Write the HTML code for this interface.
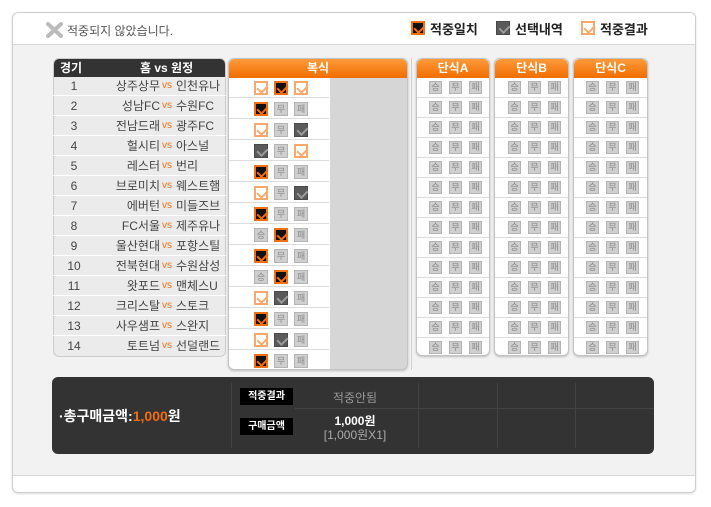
<!DOCTYPE html>
<html><head><meta charset="utf-8"><style>
*{margin:0;padding:0;box-sizing:border-box}
body{width:711px;height:507px;background:#fff;font-family:"Liberation Sans","Noto Sans CJK KR",sans-serif;position:relative;overflow:hidden}
.a{position:absolute}
#wrap{left:12px;top:12px;width:684px;height:481px;border:1px solid #cfcfcf;border-radius:6px;background:#f2f2f2;overflow:hidden;box-shadow:0 1px 2px #ddd}
#hd{left:0;top:0;width:682px;height:32px;background:#fff;border-bottom:1px solid #d8d8d8}
#ft{left:0;top:462px;width:682px;height:20px;background:#fff;border-top:1px solid #d8d8d8}
.c{position:absolute;width:14px;height:14px}
.c.x{background:#111;border:2px solid #f07015}
.c.o{background:#fff;border:2px solid #f7a86c}
.c.g{background:#5a5a5a;border:1px solid #4a4a4a}
.c::after{content:'';position:absolute;left:3px;top:0px;width:5px;height:8px;border:solid;border-width:0 2px 2px 0;transform:rotate(45deg)}
.c.x::after{border-color:#f26d10}
.c.o::after{border-color:#f8ab70}
.c.g::after{border-color:#9a9a9a;left:4px;top:1px}
.n{position:absolute;width:14px;height:14px;background:#cfcfcf;border:1px solid #b4b4b4;color:#8a8a8a;font-size:9px;line-height:12px;text-align:center}
.oh{background:linear-gradient(#ff9a3a,#f06d00);color:#fff;font-weight:bold;font-size:12px;text-align:center;line-height:19px;border-radius:6px 6px 0 0;height:19px}
.row{position:absolute;left:0;height:20px;border-bottom:1px solid #fff;width:100%}
.lt{font-size:12px;color:#444;line-height:20px}
.vs{color:#f07015;font-size:10px}
.drow{position:absolute;left:0;width:100%;height:21px;border-bottom:1px solid #dcdcdc}
.dl{position:absolute;width:13px;height:13px;background:#cfcfcf;border:1px solid #b4b4b4;color:#8a8a8a;font-size:9px;line-height:11px;text-align:center}
.dc{position:absolute;left:0;width:711px;height:20px}
</style></head><body>
<div class="a" id="wrap">
<div class="a" id="hd"></div>
<div class="a" id="ft"></div>
</div>
<svg class="a" style="left:46px;top:22px" width="17" height="16"><path d="M2 2L15 14M15 2L2 14" stroke="#bbb" stroke-width="4" stroke-linecap="round"/></svg>
<div class="a" style="left:67px;top:22px;font-size:12px;color:#555">적중되지 않았습니다.</div>
<div class="c x" style="left:411px;top:21px"></div><div class="a" style="left:430px;top:19px;font-size:13px;color:#222;font-weight:bold">적중일치</div>
<div class="c g" style="left:496px;top:21px"></div><div class="a" style="left:515px;top:19px;font-size:13px;color:#222;font-weight:bold">선택내역</div>
<div class="c o" style="left:581px;top:21px"></div><div class="a" style="left:600px;top:19px;font-size:13px;color:#222;font-weight:bold">적중결과</div>

<div class="a" style="left:53px;top:58px;width:173px;height:299px;background:#ebebeb;border:1px solid #ccc;border-radius:6px;overflow:hidden">
<div class="a" style="left:0;top:0;width:173px;height:18px;background:#333;color:#fff;font-size:12px;font-weight:bold;line-height:18px"><span class="a" style="left:6px">경기</span><span class="a" style="left:86px">홈 vs 원정</span></div>
</div>
<div class="a lt" style="left:53px;top:76px;width:173px">
<div class="row" style="top:0"><span class="a" style="left:0;width:42px;text-align:center">1</span><span class="a" style="right:66px">상주상무</span><span class="a vs" style="left:109px">vs</span><span class="a" style="left:123px">인천유나</span></div>
<div class="row" style="top:20px"><span class="a" style="left:0;width:42px;text-align:center">2</span><span class="a" style="right:66px">성남FC</span><span class="a vs" style="left:109px">vs</span><span class="a" style="left:123px">수원FC</span></div>
<div class="row" style="top:40px"><span class="a" style="left:0;width:42px;text-align:center">3</span><span class="a" style="right:66px">전남드래</span><span class="a vs" style="left:109px">vs</span><span class="a" style="left:123px">광주FC</span></div>
<div class="row" style="top:60px"><span class="a" style="left:0;width:42px;text-align:center">4</span><span class="a" style="right:66px">헐시티</span><span class="a vs" style="left:109px">vs</span><span class="a" style="left:123px">아스널</span></div>
<div class="row" style="top:80px"><span class="a" style="left:0;width:42px;text-align:center">5</span><span class="a" style="right:66px">레스터</span><span class="a vs" style="left:109px">vs</span><span class="a" style="left:123px">번리</span></div>
<div class="row" style="top:100px"><span class="a" style="left:0;width:42px;text-align:center">6</span><span class="a" style="right:66px">브로미치</span><span class="a vs" style="left:109px">vs</span><span class="a" style="left:123px">웨스트햄</span></div>
<div class="row" style="top:120px"><span class="a" style="left:0;width:42px;text-align:center">7</span><span class="a" style="right:66px">에버턴</span><span class="a vs" style="left:109px">vs</span><span class="a" style="left:123px">미들즈브</span></div>
<div class="row" style="top:140px"><span class="a" style="left:0;width:42px;text-align:center">8</span><span class="a" style="right:66px">FC서울</span><span class="a vs" style="left:109px">vs</span><span class="a" style="left:123px">제주유나</span></div>
<div class="row" style="top:160px"><span class="a" style="left:0;width:42px;text-align:center">9</span><span class="a" style="right:66px">울산현대</span><span class="a vs" style="left:109px">vs</span><span class="a" style="left:123px">포항스틸</span></div>
<div class="row" style="top:180px"><span class="a" style="left:0;width:42px;text-align:center">10</span><span class="a" style="right:66px">전북현대</span><span class="a vs" style="left:109px">vs</span><span class="a" style="left:123px">수원삼성</span></div>
<div class="row" style="top:200px"><span class="a" style="left:0;width:42px;text-align:center">11</span><span class="a" style="right:66px">왓포드</span><span class="a vs" style="left:109px">vs</span><span class="a" style="left:123px">맨체스U</span></div>
<div class="row" style="top:220px"><span class="a" style="left:0;width:42px;text-align:center">12</span><span class="a" style="right:66px">크리스탈</span><span class="a vs" style="left:109px">vs</span><span class="a" style="left:123px">스토크</span></div>
<div class="row" style="top:240px"><span class="a" style="left:0;width:42px;text-align:center">13</span><span class="a" style="right:66px">사우샘프</span><span class="a vs" style="left:109px">vs</span><span class="a" style="left:123px">스완지</span></div>
<div class="row" style="top:260px;border:none"><span class="a" style="left:0;width:42px;text-align:center">14</span><span class="a" style="right:66px">토트넘</span><span class="a vs" style="left:109px">vs</span><span class="a" style="left:123px">선덜랜드</span></div>
</div>

<div class="a" style="left:228px;top:58px;width:180px;height:312px;border:1px solid #c4c4c4;border-radius:6px;overflow:hidden;background:#d6d6d6;box-shadow:0 1px 2px #bbb">
<div class="oh">복식</div>
<div class="a" style="left:0;top:19px;width:101px;height:293px;background:#fff"></div>
</div>
<div class="a" style="left:229px;top:77px;width:100px">
<div class="drow" style="top:0"><div class="c o" style="left:25px;top:4px"></div><div class="c x" style="left:45px;top:4px"></div><div class="c o" style="left:65px;top:4px"></div></div>
<div class="drow" style="top:21px"><div class="c x" style="left:25px;top:4px"></div><div class="n" style="left:45px;top:4px">무</div><div class="n" style="left:65px;top:4px">패</div></div>
<div class="drow" style="top:42px"><div class="c o" style="left:25px;top:4px"></div><div class="n" style="left:45px;top:4px">무</div><div class="c g" style="left:65px;top:4px"></div></div>
<div class="drow" style="top:63px"><div class="c g" style="left:25px;top:4px"></div><div class="n" style="left:45px;top:4px">무</div><div class="c o" style="left:65px;top:4px"></div></div>
<div class="drow" style="top:84px"><div class="c x" style="left:25px;top:4px"></div><div class="n" style="left:45px;top:4px">무</div><div class="n" style="left:65px;top:4px">패</div></div>
<div class="drow" style="top:105px"><div class="c o" style="left:25px;top:4px"></div><div class="n" style="left:45px;top:4px">무</div><div class="c g" style="left:65px;top:4px"></div></div>
<div class="drow" style="top:126px"><div class="c x" style="left:25px;top:4px"></div><div class="n" style="left:45px;top:4px">무</div><div class="n" style="left:65px;top:4px">패</div></div>
<div class="drow" style="top:147px"><div class="n" style="left:25px;top:4px">승</div><div class="c x" style="left:45px;top:4px"></div><div class="n" style="left:65px;top:4px">패</div></div>
<div class="drow" style="top:168px"><div class="c x" style="left:25px;top:4px"></div><div class="n" style="left:45px;top:4px">무</div><div class="n" style="left:65px;top:4px">패</div></div>
<div class="drow" style="top:189px"><div class="n" style="left:25px;top:4px">승</div><div class="c x" style="left:45px;top:4px"></div><div class="n" style="left:65px;top:4px">패</div></div>
<div class="drow" style="top:210px"><div class="c o" style="left:25px;top:4px"></div><div class="c g" style="left:45px;top:4px"></div><div class="n" style="left:65px;top:4px">패</div></div>
<div class="drow" style="top:231px"><div class="c x" style="left:25px;top:4px"></div><div class="n" style="left:45px;top:4px">무</div><div class="n" style="left:65px;top:4px">패</div></div>
<div class="drow" style="top:252px"><div class="c o" style="left:25px;top:4px"></div><div class="c g" style="left:45px;top:4px"></div><div class="n" style="left:65px;top:4px">패</div></div>
<div class="drow" style="top:273px;border:none"><div class="c x" style="left:25px;top:4px"></div><div class="n" style="left:45px;top:4px">무</div><div class="n" style="left:65px;top:4px">패</div></div>
</div>

<div class="a" style="left:411px;top:58px;width:1px;height:312px;background:#d0d0d0"></div>

<div class="a" style="left:416px;top:58px;width:74px;height:298px;border:1px solid #c4c4c4;border-radius:6px;overflow:hidden;background:#fff;box-shadow:0 1px 2px #bbb;background-image:repeating-linear-gradient(#fff 0 19px,#dcdcdc 19px 20px);background-position:0 19px"><div class="oh">단식A</div></div>
<div class="a" style="left:494px;top:58px;width:75px;height:298px;border:1px solid #c4c4c4;border-radius:6px;overflow:hidden;background:#fff;box-shadow:0 1px 2px #bbb;background-image:repeating-linear-gradient(#fff 0 19px,#dcdcdc 19px 20px);background-position:0 19px"><div class="oh">단식B</div></div>
<div class="a" style="left:573px;top:58px;width:75px;height:298px;border:1px solid #c4c4c4;border-radius:6px;overflow:hidden;background:#fff;box-shadow:0 1px 2px #bbb;background-image:repeating-linear-gradient(#fff 0 19px,#dcdcdc 19px 20px);background-position:0 19px"><div class="oh">단식C</div></div>

<div class="a" style="left:0;top:81px;width:711px">
<div class="dc" style="top:0"><div class="dl" style="left:429px">승</div><div class="dl" style="left:449px">무</div><div class="dl" style="left:469px">패</div><div class="dl" style="left:508px">승</div><div class="dl" style="left:528px">무</div><div class="dl" style="left:548px">패</div><div class="dl" style="left:586px">승</div><div class="dl" style="left:606px">무</div><div class="dl" style="left:626px">패</div></div>
<div class="dc" style="top:20px"><div class="dl" style="left:429px">승</div><div class="dl" style="left:449px">무</div><div class="dl" style="left:469px">패</div><div class="dl" style="left:508px">승</div><div class="dl" style="left:528px">무</div><div class="dl" style="left:548px">패</div><div class="dl" style="left:586px">승</div><div class="dl" style="left:606px">무</div><div class="dl" style="left:626px">패</div></div>
<div class="dc" style="top:40px"><div class="dl" style="left:429px">승</div><div class="dl" style="left:449px">무</div><div class="dl" style="left:469px">패</div><div class="dl" style="left:508px">승</div><div class="dl" style="left:528px">무</div><div class="dl" style="left:548px">패</div><div class="dl" style="left:586px">승</div><div class="dl" style="left:606px">무</div><div class="dl" style="left:626px">패</div></div>
<div class="dc" style="top:60px"><div class="dl" style="left:429px">승</div><div class="dl" style="left:449px">무</div><div class="dl" style="left:469px">패</div><div class="dl" style="left:508px">승</div><div class="dl" style="left:528px">무</div><div class="dl" style="left:548px">패</div><div class="dl" style="left:586px">승</div><div class="dl" style="left:606px">무</div><div class="dl" style="left:626px">패</div></div>
<div class="dc" style="top:80px"><div class="dl" style="left:429px">승</div><div class="dl" style="left:449px">무</div><div class="dl" style="left:469px">패</div><div class="dl" style="left:508px">승</div><div class="dl" style="left:528px">무</div><div class="dl" style="left:548px">패</div><div class="dl" style="left:586px">승</div><div class="dl" style="left:606px">무</div><div class="dl" style="left:626px">패</div></div>
<div class="dc" style="top:100px"><div class="dl" style="left:429px">승</div><div class="dl" style="left:449px">무</div><div class="dl" style="left:469px">패</div><div class="dl" style="left:508px">승</div><div class="dl" style="left:528px">무</div><div class="dl" style="left:548px">패</div><div class="dl" style="left:586px">승</div><div class="dl" style="left:606px">무</div><div class="dl" style="left:626px">패</div></div>
<div class="dc" style="top:120px"><div class="dl" style="left:429px">승</div><div class="dl" style="left:449px">무</div><div class="dl" style="left:469px">패</div><div class="dl" style="left:508px">승</div><div class="dl" style="left:528px">무</div><div class="dl" style="left:548px">패</div><div class="dl" style="left:586px">승</div><div class="dl" style="left:606px">무</div><div class="dl" style="left:626px">패</div></div>
<div class="dc" style="top:140px"><div class="dl" style="left:429px">승</div><div class="dl" style="left:449px">무</div><div class="dl" style="left:469px">패</div><div class="dl" style="left:508px">승</div><div class="dl" style="left:528px">무</div><div class="dl" style="left:548px">패</div><div class="dl" style="left:586px">승</div><div class="dl" style="left:606px">무</div><div class="dl" style="left:626px">패</div></div>
<div class="dc" style="top:160px"><div class="dl" style="left:429px">승</div><div class="dl" style="left:449px">무</div><div class="dl" style="left:469px">패</div><div class="dl" style="left:508px">승</div><div class="dl" style="left:528px">무</div><div class="dl" style="left:548px">패</div><div class="dl" style="left:586px">승</div><div class="dl" style="left:606px">무</div><div class="dl" style="left:626px">패</div></div>
<div class="dc" style="top:180px"><div class="dl" style="left:429px">승</div><div class="dl" style="left:449px">무</div><div class="dl" style="left:469px">패</div><div class="dl" style="left:508px">승</div><div class="dl" style="left:528px">무</div><div class="dl" style="left:548px">패</div><div class="dl" style="left:586px">승</div><div class="dl" style="left:606px">무</div><div class="dl" style="left:626px">패</div></div>
<div class="dc" style="top:200px"><div class="dl" style="left:429px">승</div><div class="dl" style="left:449px">무</div><div class="dl" style="left:469px">패</div><div class="dl" style="left:508px">승</div><div class="dl" style="left:528px">무</div><div class="dl" style="left:548px">패</div><div class="dl" style="left:586px">승</div><div class="dl" style="left:606px">무</div><div class="dl" style="left:626px">패</div></div>
<div class="dc" style="top:220px"><div class="dl" style="left:429px">승</div><div class="dl" style="left:449px">무</div><div class="dl" style="left:469px">패</div><div class="dl" style="left:508px">승</div><div class="dl" style="left:528px">무</div><div class="dl" style="left:548px">패</div><div class="dl" style="left:586px">승</div><div class="dl" style="left:606px">무</div><div class="dl" style="left:626px">패</div></div>
<div class="dc" style="top:240px"><div class="dl" style="left:429px">승</div><div class="dl" style="left:449px">무</div><div class="dl" style="left:469px">패</div><div class="dl" style="left:508px">승</div><div class="dl" style="left:528px">무</div><div class="dl" style="left:548px">패</div><div class="dl" style="left:586px">승</div><div class="dl" style="left:606px">무</div><div class="dl" style="left:626px">패</div></div>
<div class="dc" style="top:260px"><div class="dl" style="left:429px">승</div><div class="dl" style="left:449px">무</div><div class="dl" style="left:469px">패</div><div class="dl" style="left:508px">승</div><div class="dl" style="left:528px">무</div><div class="dl" style="left:548px">패</div><div class="dl" style="left:586px">승</div><div class="dl" style="left:606px">무</div><div class="dl" style="left:626px">패</div></div>
</div>

<div class="a" style="left:52px;top:377px;width:602px;height:77px;background:#333;border-radius:6px"></div>
<div class="a" style="left:59px;top:406px;font-size:14px;color:#fff;font-weight:bold">·총구매금액:<span style="color:#f26d10">1,000</span>원</div>
<div class="a" style="left:231px;top:383px;width:1px;height:65px;background:#444"></div>
<div class="a" style="left:295px;top:408px;width:359px;height:1px;background:#444"></div>
<div class="a" style="left:418px;top:383px;width:1px;height:65px;background:#444"></div>
<div class="a" style="left:497px;top:383px;width:1px;height:65px;background:#444"></div>
<div class="a" style="left:575px;top:383px;width:1px;height:65px;background:#444"></div>
<div class="a" style="left:240px;top:388px;width:53px;height:17px;background:#000;color:#fff;font-size:10px;font-weight:bold;text-align:center;line-height:17px">적중결과</div>
<div class="a" style="left:240px;top:418px;width:53px;height:17px;background:#000;color:#fff;font-size:10px;font-weight:bold;text-align:center;line-height:17px">구매금액</div>
<div class="a" style="left:305px;top:389px;width:100px;text-align:center;font-size:12px;color:#999">적중안됨</div>
<div class="a" style="left:305px;top:412px;width:100px;text-align:center;font-size:12px;color:#fff;font-weight:bold">1,000원</div>
<div class="a" style="left:305px;top:426px;width:100px;text-align:center;font-size:12px;color:#aaa">[1,000원X1]</div>
</body></html>
